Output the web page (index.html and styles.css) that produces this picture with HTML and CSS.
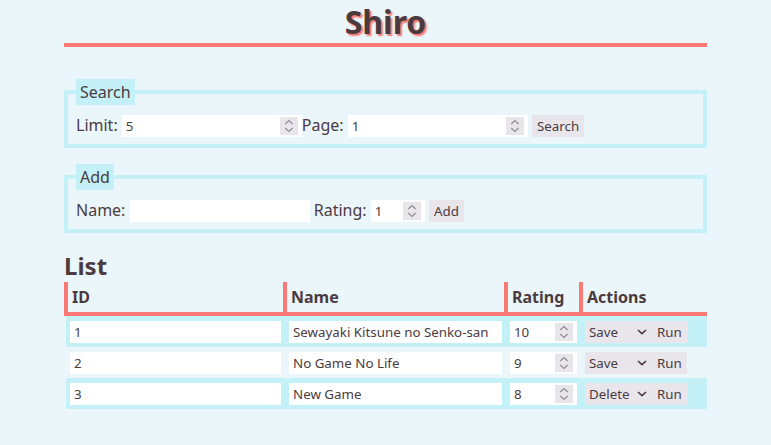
FILE: index.html
```html
<!DOCTYPE html>
<html lang="en">
<head>
<meta charset="utf-8">
<title>Shiro</title>
<link rel="stylesheet" href="styles.css">
</head>
<body>
<div class="page">
  <h1 class="title">Shiro</h1>

  <fieldset class="box box-search">
    <legend>Search</legend>
    <div class="row"><label>Limit: <span class="num w-wide"><input class="num-in" type="number" value="5"><span class="spin"><svg viewBox="0 0 18 18" width="18" height="18"><path d="M5.2 7 L8.9 3.6 L12.6 7"/><path d="M5.2 11 L8.9 14.4 L12.6 11"/></svg></span></span></label><label>Page: <span class="num w-wide"><input class="num-in" type="number" value="1"><span class="spin"><svg viewBox="0 0 18 18" width="18" height="18"><path d="M5.2 7 L8.9 3.6 L12.6 7"/><path d="M5.2 11 L8.9 14.4 L12.6 11"/></svg></span></span></label> <button class="btn" type="button">Search</button></div>
  </fieldset>

  <fieldset class="box box-add">
    <legend>Add</legend>
    <div class="row"><label>Name: <input class="field w-wide" type="text"></label> <label>Rating: <span class="num w-rating"><input class="num-in" type="number" value="1"><span class="spin"><svg viewBox="0 0 18 18" width="18" height="18"><path d="M5.2 7 L8.9 3.6 L12.6 7"/><path d="M5.2 11 L8.9 14.4 L12.6 11"/></svg></span></span></label> <button class="btn" type="button">Add</button></div>
  </fieldset>

  <h2 class="list-title">List</h2>
  <table class="list">
    <thead>
      <tr>
        <th class="c-id">ID</th>
        <th class="c-name">Name</th>
        <th class="c-rating">Rating</th>
        <th class="c-actions">Actions</th>
      </tr>
    </thead>
    <tbody>
      <tr class="alt">
        <td><input class="field full" type="text" value="1"></td>
        <td><input class="field full" type="text" value="Sewayaki Kitsune no Senko-san"></td>
        <td><span class="num full"><input class="num-in" type="number" value="10"><span class="spin"><svg viewBox="0 0 18 18" width="18" height="18"><path d="M5.2 7 L8.9 3.6 L12.6 7"/><path d="M5.2 11 L8.9 14.4 L12.6 11"/></svg></span></span></td>
        <td class="actions"><span class="pick"><select class="sel"><option selected>Save</option><option>Delete</option></select><svg class="caret" viewBox="0 0 10 6" width="10" height="6"><path d="M1 1 L5 4.6 L9 1"/></svg></span><button class="btn" type="button">Run</button></td>
      </tr>
      <tr>
        <td><input class="field full" type="text" value="2"></td>
        <td><input class="field full" type="text" value="No Game No Life"></td>
        <td><span class="num full"><input class="num-in" type="number" value="9"><span class="spin"><svg viewBox="0 0 18 18" width="18" height="18"><path d="M5.2 7 L8.9 3.6 L12.6 7"/><path d="M5.2 11 L8.9 14.4 L12.6 11"/></svg></span></span></td>
        <td class="actions"><span class="pick"><select class="sel"><option selected>Save</option><option>Delete</option></select><svg class="caret" viewBox="0 0 10 6" width="10" height="6"><path d="M1 1 L5 4.6 L9 1"/></svg></span><button class="btn" type="button">Run</button></td>
      </tr>
      <tr class="alt">
        <td><input class="field full" type="text" value="3"></td>
        <td><input class="field full" type="text" value="New Game"></td>
        <td><span class="num full"><input class="num-in" type="number" value="8"><span class="spin"><svg viewBox="0 0 18 18" width="18" height="18"><path d="M5.2 7 L8.9 3.6 L12.6 7"/><path d="M5.2 11 L8.9 14.4 L12.6 11"/></svg></span></span></td>
        <td class="actions"><span class="pick"><select class="sel"><option>Save</option><option selected>Delete</option></select><svg class="caret" viewBox="0 0 10 6" width="10" height="6"><path d="M1 1 L5 4.6 L9 1"/></svg></span><button class="btn" type="button">Run</button></td>
      </tr>
    </tbody>
  </table>
</div>
</body>
</html>
```

FILE: styles.css
```css
html, body {
  margin: 0;
  padding: 0;
}

body {
  background: #ebf6fb;
  color: #4b3b3f;
  font-family: "Noto Sans", "Open Sans", sans-serif;
  font-size: 16px;
}

.page {
  width: 643px;
  margin: 0 auto;
}

.title {
  margin: 0;
  font-size: 32px;
  font-weight: 700;
  text-align: center;
  line-height: normal;
  border-bottom: 4px solid #f77874;
  text-shadow: 2px 2px 1.5px #f77874;
}

.box {
  margin: 32px 0 0;
  border: 4px solid #c4f1f8;
  padding: 9px 8px 7px;
  min-inline-size: 0;
}

.box-add {
  margin-top: 16px;
}

.box legend {
  background: #c4f1f8;
  padding: 2px 4px;
  font-size: 16px;
}

.row {
  line-height: normal;
}

.field {
  font-family: inherit;
  font-size: 13.333px;
  color: inherit;
  background: #fff;
  border: none;
  padding: 2px 4px;
  box-sizing: border-box;
  height: 22px;
  vertical-align: baseline;
  outline: none;
}

/* number input with a drawn spinner */
.num {
  display: inline-flex;
  align-items: center;
  box-sizing: border-box;
  height: 22px;
  background: #fff;
  padding-right: 4px;
  vertical-align: baseline;
}

.num-in {
  flex: 1 1 auto;
  min-width: 0;
  width: 10px;
  height: 22px;
  box-sizing: border-box;
  border: none;
  background: transparent;
  padding: 2px 4px;
  font-family: inherit;
  font-size: 13.333px;
  color: inherit;
  outline: none;
  -moz-appearance: textfield;
  appearance: textfield;
}

.num-in::-webkit-inner-spin-button,
.num-in::-webkit-outer-spin-button {
  -webkit-appearance: none;
  margin: 0;
}

.spin {
  flex: none;
  display: flex;
  width: 18px;
  height: 18px;
  background: #e8e6eb;
}

.spin svg {
  display: block;
  fill: none;
  stroke: #8e8b95;
  stroke-width: 1.2;
}

.w-wide {
  width: 180px;
}

.w-rating {
  width: 54px;
}

.full {
  width: 100%;
}

.btn {
  font-family: inherit;
  font-size: 13.333px;
  color: inherit;
  background: #e8e6eb;
  border: none;
  border-radius: 0;
  padding: 0 5px;
  height: 22px;
  vertical-align: baseline;
}

.pick {
  position: relative;
  display: inline-block;
  vertical-align: baseline;
}

.sel {
  font-family: inherit;
  font-size: 13.333px;
  color: inherit;
  background-color: #e8e6eb;
  border: none;
  border-radius: 0;
  height: 22px;
  width: 67px;
  padding: 0 0 0 4px;
  -webkit-appearance: none;
  appearance: none;
  outline: none;
  vertical-align: baseline;
}

.caret {
  position: absolute;
  right: 5px;
  top: 9px;
  fill: none;
  stroke: #4b3b3f;
  stroke-width: 1.6;
  pointer-events: none;
}

.list-title {
  margin: 16px 0 0;
  font-size: 24px;
  font-weight: 700;
  line-height: normal;
}

.list {
  width: 100%;
  border-collapse: collapse;
}

.list th {
  text-align: left;
  font-weight: 700;
  padding: 4px 3px 4px 4px;
  border-left: 4px solid #f77874;
  border-bottom: 4px solid #f77874;
}

.c-id {
  width: 208px;
}

.c-name {
  width: 210px;
}

.c-rating {
  width: 64px;
}

.list td {
  padding: 4px;
  line-height: normal;
}

.list tr.alt td {
  background: #c4f1f8;
}

.actions {
  white-space: nowrap;
}
```
